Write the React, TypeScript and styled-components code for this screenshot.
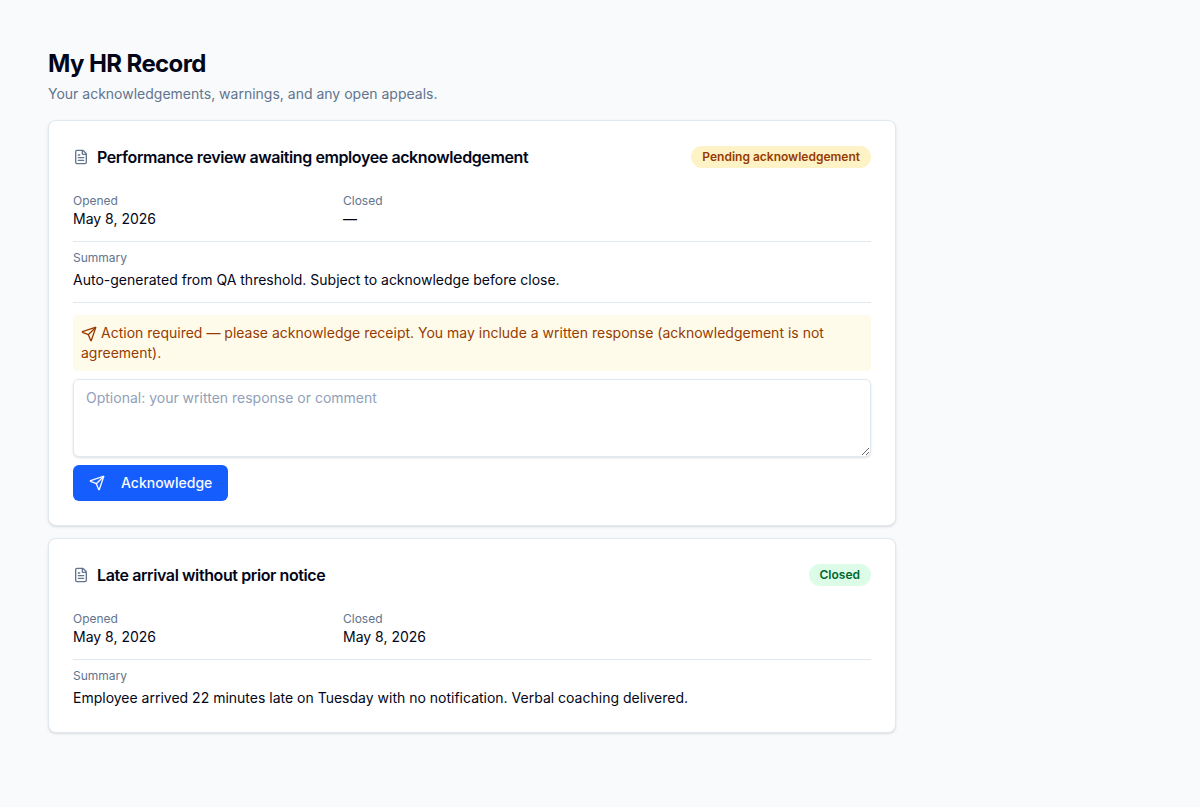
import React from "react";
import styled, { createGlobalStyle } from "styled-components";
import { FileText, Send } from "lucide-react";

const GlobalStyle = createGlobalStyle`
  *, *::before, *::after { box-sizing: border-box; }
  body {
    margin: 0;
    background: #f8fafc;
    color: #020618;
    font-family: Inter, "Liberation Sans", sans-serif;
    font-size: 14px;
    line-height: 20px;
  }
  h1, h2, p, dl, dd { margin: 0; }
`;

const Page = styled.main`
  max-width: 944px;
  padding: 48px;
`;

const Header = styled.header`
  display: flex;
  flex-direction: column;
  gap: 4px;
  margin-bottom: 16px;
`;

const Title = styled.h1`
  font-size: 24px;
  line-height: 32px;
  font-weight: 700;
  letter-spacing: -0.025em;
`;

const Subtitle = styled.p`
  color: #62748e;
`;

const Records = styled.div`
  display: flex;
  flex-direction: column;
  gap: 12px;
`;

const Card = styled.article`
  display: flex;
  flex-direction: column;
  padding: 24px;
  background: #fff;
  border: 1px solid #e2e8f0;
  border-radius: 8px;
  box-shadow: 0 1px 3px 0 rgb(0 0 0 / 0.1), 0 1px 2px -1px rgb(0 0 0 / 0.1);
`;

const CardHeader = styled.div`
  display: flex;
  align-items: center;
  justify-content: space-between;
  gap: 8px;
  margin-bottom: 24px;
`;

const CardTitle = styled.h2`
  display: flex;
  align-items: center;
  gap: 8px;
  font-size: 16px;
  line-height: 24px;
  font-weight: 600;
  letter-spacing: -0.025em;

  svg { color: #62748e; }
`;

const tones = {
  pending: { background: "#fef3c6", color: "#973c00" },
  closed: { background: "#dcfce7", color: "#016630" },
};

const Badge = styled.span<{ $tone: keyof typeof tones }>`
  padding: 2px 10px;
  border: 1px solid transparent;
  border-radius: 999px;
  background: ${({ $tone }) => tones[$tone].background};
  color: ${({ $tone }) => tones[$tone].color};
  font-size: 12px;
  line-height: 16px;
  font-weight: 600;
`;

const Dates = styled.dl`
  display: grid;
  grid-template-columns: repeat(3, 1fr);
  gap: 12px;
`;

const Label = styled.dt`
  color: #62748e;
  font-size: 12px;
  line-height: 16px;
`;

const Section = styled.dl`
  display: flex;
  flex-direction: column;
  gap: 4px;
  margin-top: 12px;
  padding-top: 8px;
  border-top: 1px solid #e2e8f0;
`;

const Form = styled.form`
  display: flex;
  flex-direction: column;
  align-items: flex-start;
  gap: 8px;
  margin-top: 12px;
  padding-top: 12px;
  border-top: 1px solid #e2e8f0;
`;

const Notice = styled.label`
  width: 100%;
  padding: 8px;
  border-radius: 4px;
  background: #fffbeb;
  color: #973c00;

  svg { margin-right: 4px; vertical-align: middle; }
`;

const Response = styled.textarea`
  display: block;
  width: 100%;
  min-height: 60px;
  padding: 8px 12px;
  border: 1px solid #e2e8f0;
  border-radius: 6px;
  background: #fff;
  box-shadow: 0 1px 3px 0 rgb(0 0 0 / 0.1), 0 1px 2px -1px rgb(0 0 0 / 0.1);
  color: inherit;
  font: inherit;
  resize: vertical;

  &::placeholder { color: #90a1b9; }
`;

const Submit = styled.button`
  display: inline-flex;
  align-items: center;
  gap: 16px;
  height: 36px;
  padding: 8px 16px;
  border: 0;
  border-radius: 6px;
  background: #155dfc;
  color: #f8fafc;
  font: inherit;
  font-weight: 500;
  cursor: pointer;
`;

type RecordProps = {
  title: string;
  status: string;
  tone: keyof typeof tones;
  opened: string;
  closed: string;
  summary: string;
  children?: React.ReactNode;
};

function HrRecord({ title, status, tone, opened, closed, summary, children }: RecordProps) {
  return (
    <Card>
      <CardHeader>
        <CardTitle><FileText size={16} aria-hidden />{title}</CardTitle>
        <Badge $tone={tone}>{status}</Badge>
      </CardHeader>
      <Dates>
        <div><Label>Opened</Label><dd>{opened}</dd></div>
        <div><Label>Closed</Label><dd>{closed}</dd></div>
      </Dates>
      <Section>
        <Label>Summary</Label>
        <dd>{summary}</dd>
      </Section>
      {children}
    </Card>
  );
}

export default function App() {
  return (
    <>
      <GlobalStyle />
      <Page>
        <Header>
          <Title>My HR Record</Title>
          <Subtitle>Your acknowledgements, warnings, and any open appeals.</Subtitle>
        </Header>
        <Records>
          <HrRecord
            title="Performance review awaiting employee acknowledgement"
            status="Pending acknowledgement"
            tone="pending"
            opened="May 8, 2026"
            closed="—"
            summary="Auto-generated from QA threshold. Subject to acknowledge before close."
          >
            <Form onSubmit={(event) => event.preventDefault()}>
              <Notice htmlFor="response">
                <Send size={16} aria-hidden />
                Action required — please acknowledge receipt. You may include a written response (acknowledgement is not agreement).
              </Notice>
              <Response id="response" rows={3} placeholder="Optional: your written response or comment" />
              <Submit type="submit"><Send size={16} aria-hidden />Acknowledge</Submit>
            </Form>
          </HrRecord>
          <HrRecord
            title="Late arrival without prior notice"
            status="Closed"
            tone="closed"
            opened="May 8, 2026"
            closed="May 8, 2026"
            summary="Employee arrived 22 minutes late on Tuesday with no notification. Verbal coaching delivered."
          />
        </Records>
      </Page>
    </>
  );
}
